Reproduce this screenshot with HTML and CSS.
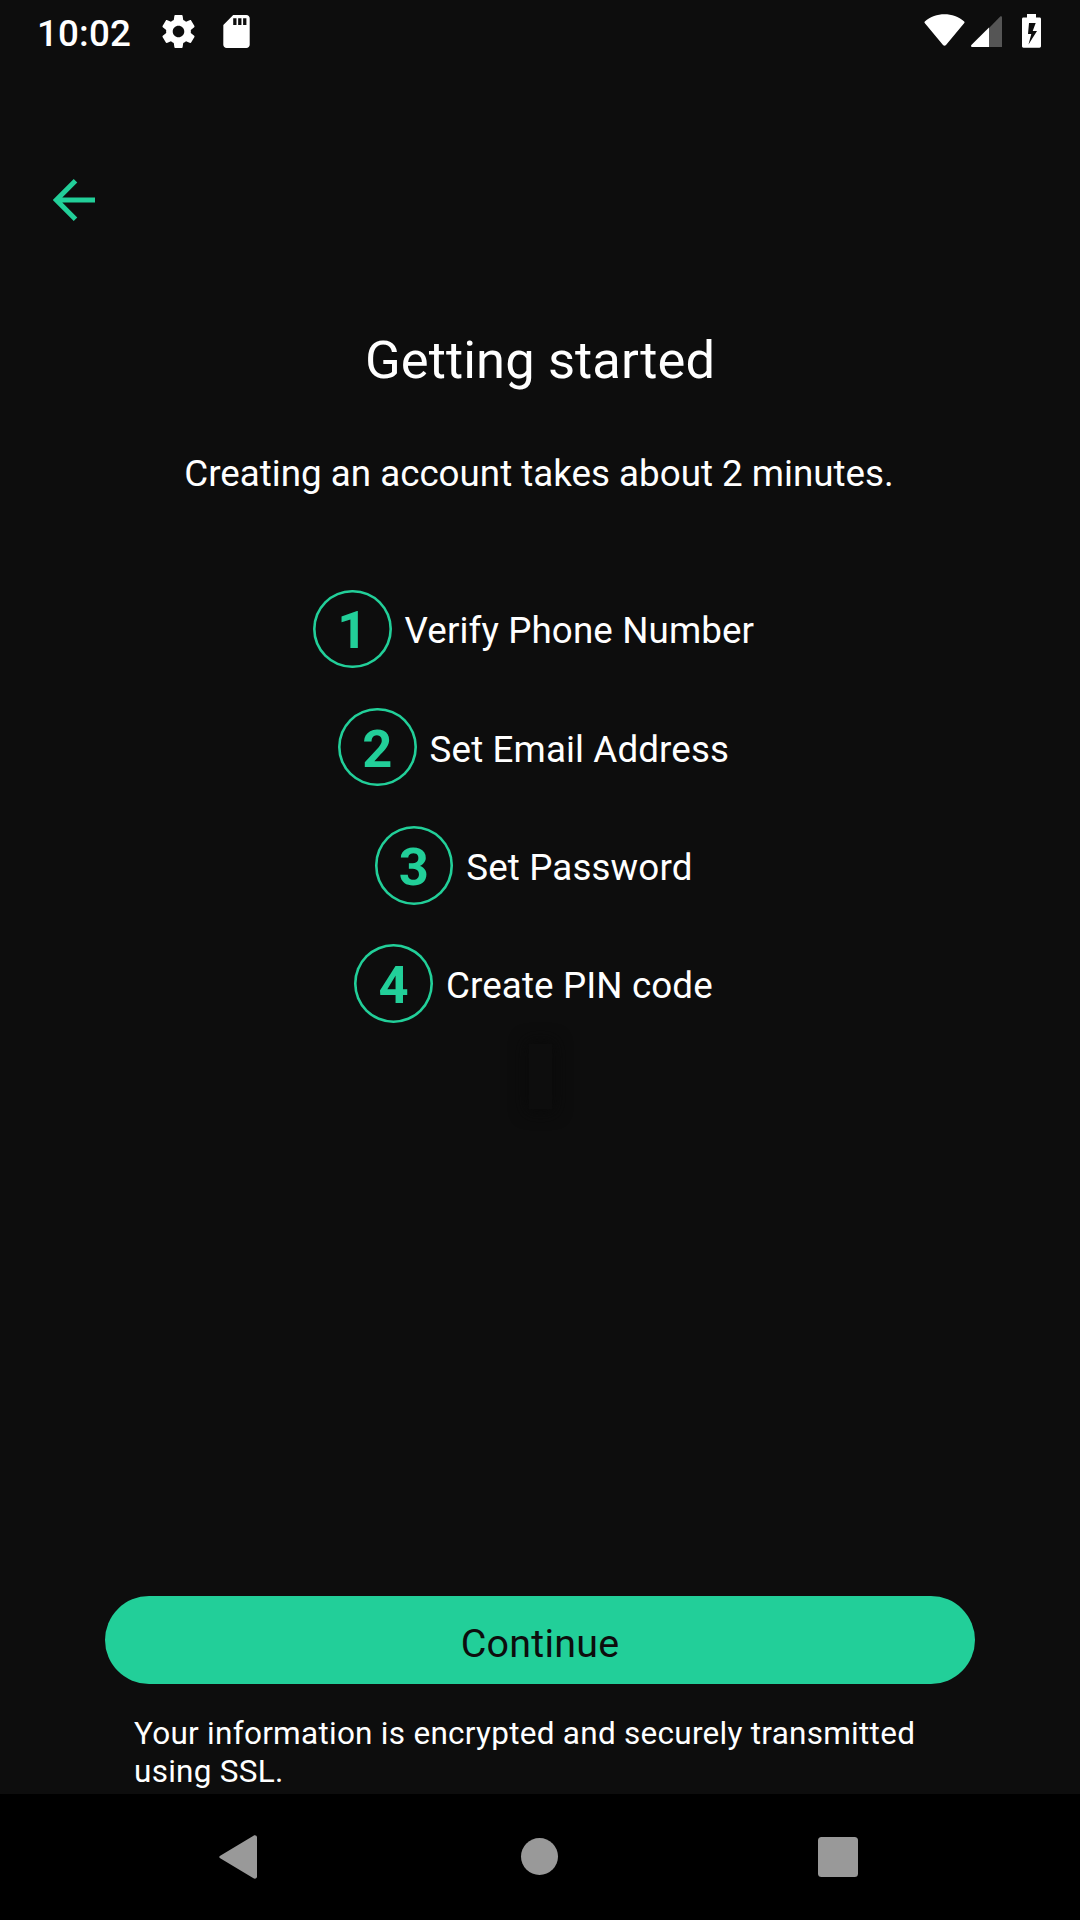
FILE: index.html
```html
<!DOCTYPE html>
<html lang="en">
<head>
<meta charset="utf-8">
<title>Getting started</title>
<link rel="stylesheet" href="styles.css">
</head>
<body>
<div class="screen">
  <header class="status-bar">
    <span class="clock">10:02</span>
    <svg class="gear" viewBox="2 2 20 20"><path fill="#fff" d="M19.43 12.98c.04-.32.07-.64.07-.98s-.03-.66-.07-.98l2.11-1.65c.19-.15.24-.42.12-.64l-2-3.46c-.12-.22-.39-.3-.61-.22l-2.49 1c-.52-.4-1.08-.73-1.69-.98l-.38-2.65C14.46 2.18 14.25 2 14 2h-4c-.25 0-.46.18-.49.42l-.38 2.65c-.61.25-1.17.59-1.69.98l-2.49-1c-.23-.09-.49 0-.61.22l-2 3.46c-.13.22-.07.49.12.64l2.11 1.65c-.04.32-.07.65-.07.98s.03.66.07.98l-2.11 1.65c-.19.15-.24.42-.12.64l2 3.46c.12.22.39.3.61.22l2.49-1c.52.4 1.08.73 1.69.98l.38 2.65c.03.24.24.42.49.42h4c.25 0 .46-.18.49-.42l.38-2.65c.61-.25 1.17-.59 1.69-.98l2.49 1c.23.09.49 0 .61-.22l2-3.46c.12-.22.07-.49-.12-.64l-2.11-1.65zM12 15.5c-1.93 0-3.5-1.57-3.5-3.5s1.57-3.500 3.500-3.500 3.500 1.570 3.500 3.500-1.570 3.500-3.500 3.500z"/></svg>
    <svg class="sd-card" viewBox="4 2 16 20"><path fill="#fff" d="M18 2h-8L4.020 8 4 20c0 1.100.9 2 2 2h12c1.100 0 2-.9 2-2V4c0-1.100-.9-2-2-2zm-6 6h-2V4h2v4zm3 0h-2V4h2v4zm3 0h-2V4h2v4z"/></svg>
    <div class="indicators">
      <svg class="wifi" viewBox="0 0 41 32"><path fill="#fff" d="M.8 7.500C6.500 2.500 13.300.3 20.500.3s14 2.200 19.700 7.200c.5.400.5.900.1 1.400L22 31c-.9.900-2.100.9-3 0L.7 8.900C.3 8.400.3 7.900.8 7.500z"/></svg>
      <svg class="signal" viewBox="0 0 31 31"><path fill="#555" d="M18 12 29 .7c.9-.9 2-.5 2 .7V31H18z"/><path fill="#fff" d="M18 11.500V31H1.500C0 31-.4 29.800.6 28.800z"/></svg>
      <svg class="battery" viewBox="0 0 19 34"><path fill="#fff" fill-rule="evenodd" d="M5 0h9v3.500h3.500c1 0 1.500.6 1.500 1.500v27c0 1-.6 1.700-1.500 1.700h-16C.6 33.700 0 33 0 32V5c0-.9.500-1.500 1.500-1.500H5zM7 9 6 20h3.300L6.500 30.500 15 17h-4.300l3-8z"/></svg>
    </div>
  </header>
  <button class="back" aria-label="Back"><svg viewBox="0 0 42 42"><path fill="none" stroke="#22cf99" stroke-width="5" d="M42 21H4M22.500 1.800 3.300 21l19.200 19.200"/></svg></button>
  <main class="content">
    <h1 class="title">Getting started</h1>
    <p class="subtitle">Creating an account takes about 2 minutes.</p>
    <ol class="steps">
      <li class="step"><span class="number">1</span><span class="label">Verify Phone Number</span></li>
      <li class="step"><span class="number">2</span><span class="label">Set Email Address</span></li>
      <li class="step"><span class="number">3</span><span class="label">Set Password</span></li>
      <li class="step"><span class="number">4</span><span class="label">Create PIN code</span></li>
    </ol>
    <div class="shadow-box"></div>
  </main>
  <footer class="actions">
    <button class="continue">Continue</button>
    <p class="note">Your information is encrypted and securely transmitted using SSL.</p>
  </footer>
  <nav class="nav-bar">
    <svg viewBox="0 0 44 44"><path fill="#999" d="M1.200 20.700 34.500.7c1.600-.9 3.500-.1 3.500 1.800v39c0 1.900-1.900 2.700-3.500 1.800L1.200 23.300c-1.200-.7-1.200-1.900 0-2.600z"/></svg>
    <svg viewBox="0 0 44 44"><circle cx="21.500" cy="21.500" r="18.500" fill="#999"/></svg>
    <svg viewBox="0 0 44 44"><rect x="2" y="2" width="40" height="40" rx="3.500" fill="#999"/></svg>
  </nav>
</div>
</body>
</html>
```
FILE: styles.css
```css
* { box-sizing: border-box; }
body { margin: 0; background: #0d0d0d; font-family: Roboto, sans-serif; color: #fff; }
h1, p, ol { margin: 0; padding: 0; font-weight: 400; }
button { border: 0; padding: 0; background: none; font: inherit; }
svg { display: block; flex: none; }

.screen { width: 1080px; height: 1920px; display: flex; flex-direction: column; overflow: hidden; }

.status-bar { height: 63px; flex: none; display: flex; align-items: flex-start; padding: 0 39px 0 37px; }
.clock { font-size: 36.75px; font-weight: 500; letter-spacing: 0.15px; line-height: 43px; width: 125px; padding-top: 12px; }
.gear { width: 33px; height: 33px; margin: 15px 28px 0 0; }
.sd-card { width: 27px; height: 33px; margin-top: 15px; }
.indicators { display: flex; margin-left: auto; }
.wifi { width: 41px; height: 32px; margin: 14px 6px 0 0; }
.signal { width: 31px; height: 31px; margin: 16px 20px 0 0; }
.battery { width: 19px; height: 34px; margin-top: 14px; }

.back { flex: none; align-self: flex-start; width: 42px; height: 42px; margin: 115.500px 0 0 52.500px; }

.content { flex: 1; display: flex; flex-direction: column; align-items: center; }
.title { font-size: 52.5px; letter-spacing: 0.1px; line-height: 62px; margin-top: 108.5px; }
.subtitle { font-size: 36.75px; line-height: 44px; margin: 61px 2px 0 0; }
.steps { list-style: none; display: flex; flex-direction: column; align-items: center; gap: 39.4px; margin-top: 93.5px; }
.step { display: flex; align-items: center; height: 78.75px; }
.number { width: 78.75px; height: 78.75px; box-shadow: inset 0 0 0 2.6px #22cf99; border-radius: 50%; display: flex; align-items: center; justify-content: center; color: #22cf99; font-size: 52.5px; font-weight: 700; line-height: 62px; padding-top: 3px; }
.label { font-size: 36.75px; letter-spacing: 0.12px; line-height: 44px; margin: 5px 13px 0; }
.shadow-box { width: 23px; height: 65px; margin-top: 21px; background: #0d0d0d; box-shadow: 0 0 16px 3px #0a0a0a; }

.actions { flex: none; padding: 0 105px; height: 198px; }
.continue { display: block; width: 870px; height: 88px; border-radius: 44px; background: #22cf99; color: #0d0d0d; font-size: 39.4px; letter-spacing: 0.25px; line-height: 46px; padding-top: 7px; }
.note { font-size: 31.5px; letter-spacing: 0.27px; line-height: 38px; margin: 31px 20px 0 29px; }

.nav-bar { flex: none; height: 126px; background: #000; display: flex; justify-content: space-between; padding: 41px 220px 0 219px; }
.nav-bar svg { width: 44px; height: 44px; }
```
